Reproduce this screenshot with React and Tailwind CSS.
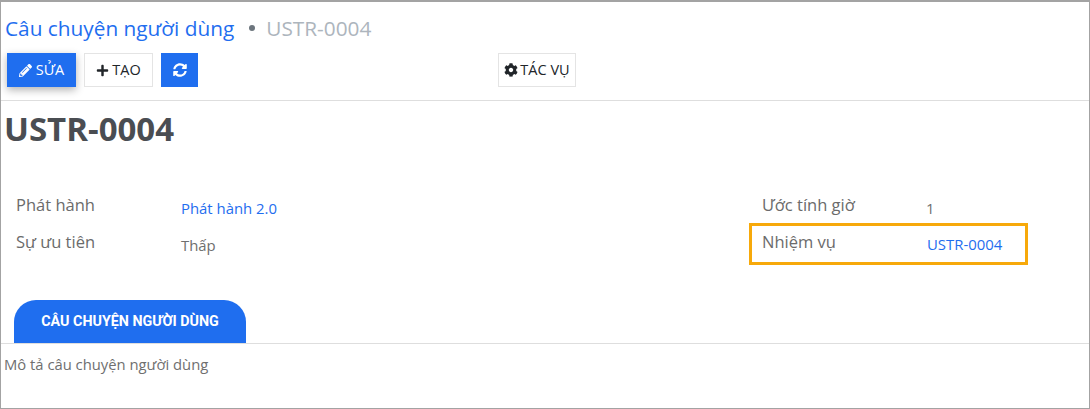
import React from 'react';
import { FaPencilAlt, FaPlus, FaSyncAlt, FaCog } from 'react-icons/fa';

const BLUE = 'text-[#1f6eef]';

// ------- Field row -------
const Field = ({ label, children, className = '', valueClass = 'pt-[3px]' }) => (
  <div className={`flex items-start ${className}`}>
    <div className="w-[165px] text-[16.5px] leading-[22px] font-medium text-[#6b6b6b]">{label}</div>
    <div className={`${valueClass} text-[14.9px] leading-[22px] text-[#6f6f6f]`}>{children}</div>
  </div>
);

const App = () => (
  <div className="w-[1090px] h-[409px] overflow-hidden bg-white border-t-2 border-l border-r border-b border-[#a3a3a3] font-['Open_Sans','Noto_Sans',sans-serif]">
    {/* Header */}
    <div className="h-[99px] border-b border-[#dedede]">
      <div className="flex items-center pl-[4px] pt-[13px] h-[38px] text-[20.8px] leading-[24px]">
        <span className={BLUE}>Câu chuyện người dùng</span>
        <span className="ml-[15px] w-[6px] h-[6px] rounded-full bg-[#6c757d]" />
        <span className="ml-[11px] text-[#adb5bd]">USTR-0004</span>
      </div>
      <div className="flex mt-[13px] pl-[6px] h-[34px]">
        <button className="flex items-center justify-center w-[69px] bg-[#1f6eef] text-white text-[14.5px] shadow-[0_3px_8px_rgba(0,0,0,0.3)]">
          <FaPencilAlt size={13} className="mr-[4px]" />SỬA
        </button>
        <button className="flex items-center justify-center w-[69px] ml-[8px] bg-white border border-[#e4e4e4] text-[#212529] text-[14.5px]">
          <FaPlus size={13} className="mr-[3px]" />TẠO
        </button>
        <button className="flex items-center justify-center w-[37px] ml-[8px] bg-[#1f6eef] text-white">
          <FaSyncAlt size={14} />
        </button>
        <button className="flex items-center justify-center w-[78px] ml-[300px] bg-white border border-[#e4e4e4] text-[#212529] text-[14.5px]">
          <FaCog size={14} className="mr-[2px]" />TÁC VỤ
        </button>
      </div>
    </div>

    {/* Title */}
    <h1 className="pl-[3px] pt-[8px] h-[60px] text-[33px] leading-[40px] font-bold text-[#4a4d52]">USTR-0004</h1>

    {/* Fields */}
    <div className="flex justify-between h-[139px] pt-[33px]">
      <div className="pl-[15px]">
        <Field label="Phát hành"><span className={BLUE}>Phát hành 2.0</span></Field>
        <Field label="Sự ưu tiên" className="mt-[12px]" valueClass="pt-[3px]">Thấp</Field>
      </div>
      <div className="mr-[61px]">
        <Field label="Ước tính giờ" className="pl-[13px]" valueClass="pt-[3px] -ml-px">1</Field>
        <Field label="Nhiệm vụ" className="pl-[10px] mt-[4px] w-[279px] h-[42px] pt-[5px] border-[3px] border-[#f7a90a]" valueClass="pt-[2px]">
          <span className={BLUE}>USTR-0004</span>
        </Field>
      </div>
    </div>

    {/* Tab */}
    <div className="pl-[13px] border-b border-[#dedede] h-[44px]">
      <div className="flex items-center justify-center w-[232px] h-[43px] rounded-t-[22px] bg-[#1f6eef] text-white text-[14.3px] font-bold font-['Roboto',sans-serif]">
        CÂU CHUYỆN NGƯỜI DÙNG
      </div>
    </div>
    <p className="pl-[3px] pt-[9px] text-[14.8px] leading-[22px] text-[#6f6f6f]">Mô tả câu chuyện người dùng</p>
  </div>
);

export default App;
